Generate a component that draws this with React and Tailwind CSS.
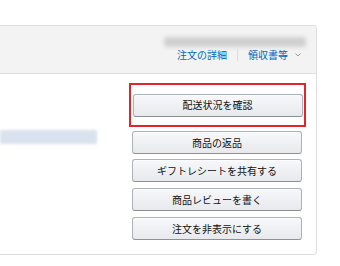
const buttons = ["商品の返品", "ギフトレシートを共有する", "商品レビューを書く", "注文を非表示にする"];

const Btn = ({ label, className = "" }) => (
  <button
    className={`w-[170px] h-[23px] flex items-center justify-center rounded-[3px] border border-[#adb1b8] border-b-[#8d9096] bg-gradient-to-b from-[#f7f8fa] to-[#e7e9ec] shadow-[inset_0_1px_0_rgba(255,255,255,0.6)] text-[10px] leading-none text-[#111] ${className}`}
  >
    {label}
  </button>
);

export default function App() {
  return (
    <div
      className="w-[340px] h-[266px] bg-white overflow-hidden pt-[25px]"
      style={{ fontFamily: '"Noto Sans CJK JP", "Noto Sans", sans-serif' }}
    >
      <div className="w-[317px] border border-l-0 border-[#dddddd] rounded-r-[4px]">
        {/* Header */}
        <div className="h-[48px] bg-[#f3f3f3] border-b border-[#dddddd] rounded-tr-[4px] flex flex-col items-end pr-[10px]">
          <div className="mt-[11px] w-[142px] h-[10px] rounded-[3px] bg-[#cfcfcf] blur-[2px]" />
          <div className="mt-[1px] mr-[5px] flex items-center text-[10px] leading-[14px] text-[#0066c0]">
            <span>注文の詳細</span>
            <span className="mx-[10px] w-px h-[12px] bg-[#dddddd]" />
            <span>領収書等</span>
            <svg className="ml-[7px]" width="6" height="4" viewBox="0 0 6 4">
              <path d="M0.5 0.5 L3 3 L5.5 0.5" fill="none" stroke="#999" strokeWidth="1" />
            </svg>
          </div>
        </div>

        {/* Body */}
        <div className="h-[180px] flex">
          <div className="w-[129px]">
            <div className="mt-[56px] w-[97px] h-[14px] bg-[#d9e2ee] blur-[1.5px]" />
          </div>
          <div className="flex flex-col">
            <div className="mt-[9px] w-[177px] h-[44px] border-2 border-[#e3242b] flex items-center justify-center">
              <Btn label="配送状況を確認" />
            </div>
            <div className="ml-[3px] mt-[4px] flex flex-col">
              {buttons.map((b, i) => (
                <Btn key={b} label={b} className={i === 0 ? "" : i === 1 ? "mt-[5px]" : "mt-[6px]"} />
              ))}
            </div>
          </div>
        </div>
      </div>
    </div>
  );
}
